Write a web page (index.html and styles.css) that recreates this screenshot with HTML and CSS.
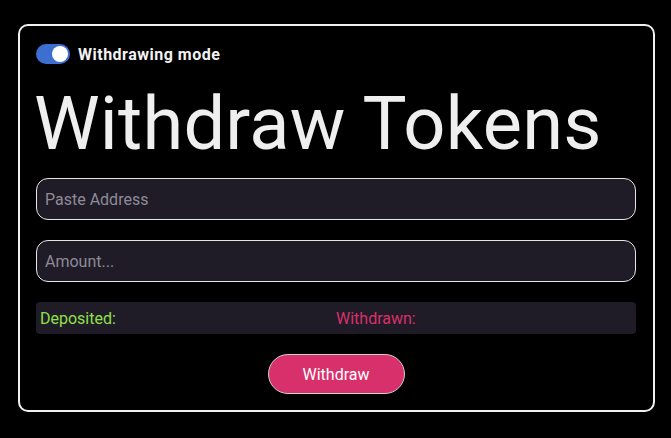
FILE: index.html
```html
<!DOCTYPE html>
<html lang="en">
<head>
<meta charset="utf-8">
<title>Withdraw Tokens</title>
<link rel="stylesheet" href="styles.css">
</head>
<body>
<main class="card">
  <div class="mode">
    <span class="toggle"><span class="knob"></span></span>
    <span class="mode-label">Withdrawing mode</span>
  </div>
  <h1 class="title">Withdraw Tokens</h1>
  <input class="field" type="text" placeholder="Paste Address">
  <input class="field" type="text" placeholder="Amount...">
  <div class="stats">
    <span class="stat deposited">Deposited:</span>
    <span class="stat withdrawn">Withdrawn:</span>
  </div>
  <div class="actions">
    <button class="btn" type="button">Withdraw</button>
  </div>
</main>
</body>
</html>
```
FILE: styles.css
```css
* { box-sizing: border-box; }
html, body { margin: 0; background: #000; }
body {
  font-family: Roboto, "Liberation Sans", sans-serif;
  color: #eee;
  padding: 24px 0 0 18px;
}
.card {
  width: 637px;
  height: 388px;
  border: 2px solid #f0f0f0;
  border-radius: 10px;
  padding: 18px 17px 16px 16px;
  display: flex;
  flex-direction: column;
}
.mode {
  display: flex;
  align-items: center;
  gap: 8px;
  height: 20px;
}
.toggle {
  width: 34px;
  height: 20px;
  border-radius: 10px;
  background: #3d6fd1;
  display: flex;
  align-items: center;
  justify-content: flex-end;
  padding-right: 2px;
}
.knob {
  width: 16px;
  height: 16px;
  border-radius: 50%;
  background: #fff;
}
.mode-label {
  font-size: 16px;
  font-weight: 700;
  letter-spacing: 0.5px;
  color: #f2f2f2;
}
.title {
  margin: 11px 0 0 -2px;
  height: 103px;
  font-size: 74px;
  line-height: 98px;
  font-weight: 400;
  color: #efefef;
  letter-spacing: 0.2px;
}
.field {
  display: block;
  width: 600px;
  height: 42px;
  margin: 0 0 20px;
  border: 1px solid #e6e6e6;
  border-radius: 12px;
  background: #201c27;
  color: #ddd;
  font-family: inherit;
  font-size: 16px;
  padding: 0 8px;
  outline: none;
}
.field::placeholder { color: #8d8b97; }
.stats {
  display: grid;
  grid-template-columns: 1fr 1fr;
  align-items: center;
  width: 600px;
  height: 32px;
  border-radius: 4px;
  background: #201c27;
  padding: 0 4px;
  font-size: 16px;
}
.deposited { color: #8fe048; }
.withdrawn { color: #d9306a; }
.actions {
  display: flex;
  justify-content: center;
  margin-top: 20px;
}
.btn {
  width: 137px;
  height: 40px;
  border-radius: 20px;
  border: 1px solid #cfcfcf;
  background: #d8306a;
  color: #fff;
  font-family: inherit;
  font-size: 16px;
  cursor: pointer;
}
```
